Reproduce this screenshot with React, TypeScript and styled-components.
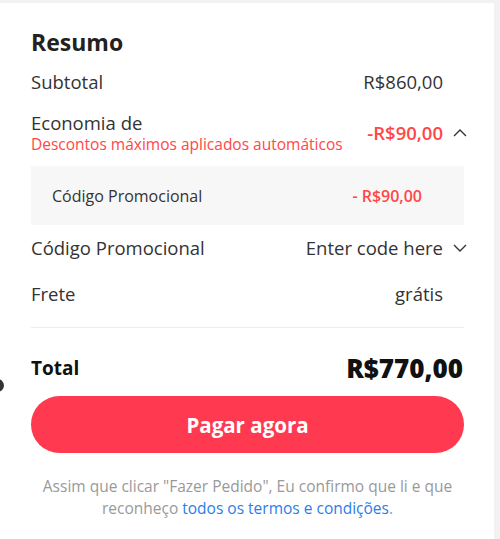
import React from "react";
import styled, { createGlobalStyle } from "styled-components";

const GlobalStyle = createGlobalStyle`
  html, body {
    margin: 0;
    padding: 0;
    background: #f2f2f2;
    font-family: "Open Sans", "Noto Sans", sans-serif;
    color: #222;
  }
`;

const Page = styled.div`
  position: relative;
  height: 539px;
  padding: 3px 6px 0 0;
  box-sizing: border-box;
  overflow: hidden;
`;

const Card = styled.div`
  background: #fff;
  height: 100%;
  padding: 23px 30px 0 31px;
  box-sizing: border-box;
  display: flex;
  flex-direction: column;
`;

const Title = styled.h2`
  margin: 0 0 11px;
  font-size: 23px;
  line-height: 32px;
  font-weight: 700;
  color: #222;
`;

const Row = styled.div<{ $gap?: number }>`
  display: grid;
  grid-template-columns: 1fr auto 21px;
  align-items: center;
  margin-top: ${(p) => p.$gap ?? 0}px;
  min-height: 26px;
`;

const Label = styled.div`
  font-size: 18.5px;
  line-height: 24px;
  color: #333;
`;

const SubLabel = styled.div`
  font-size: 15.5px;
  line-height: 19px;
  color: #ff4747;
`;

const Value = styled.div<{ $red?: boolean }>`
  font-size: 18.5px;
  line-height: 24px;
  color: ${(p) => (p.$red ? "#ff4747" : "#333")};
  font-weight: ${(p) => (p.$red ? 600 : 400)};
  text-align: right;
`;

const Chevron = styled.svg`
  width: 14px;
  height: 14px;
  justify-self: end;
  margin-right: -3px;
`;

const PromoBox = styled.div`
  background: #f7f7f7;
  height: 59px;
  margin-top: 12px;
  padding: 0 21px;
  display: grid;
  grid-template-columns: 1fr auto 21px;
  align-items: center;
`;

const PromoLabel = styled.div`
  font-size: 16px;
  color: #333;
`;

const PromoValue = styled.div`
  font-size: 16px;
  font-weight: 600;
  color: #ff4747;
`;

const Divider = styled.hr`
  border: none;
  border-top: 1px solid #ececec;
  margin: 20px 0 0;
`;

const TotalRow = styled.div`
  display: flex;
  justify-content: space-between;
  align-items: center;
  margin-top: 23px;
  line-height: 34px;
`;

const TotalLabel = styled.div`
  font-size: 19px;
  font-weight: 700;
  color: #111;
`;

const TotalValue = styled.div`
  font-size: 26px;
  font-weight: 800;
  color: #111;
  margin-right: 1px;
`;

const PayButton = styled.button`
  margin-top: 11px;
  height: 57px;
  border: none;
  border-radius: 29px;
  background: #ff3a50;
  color: #fff;
  font-family: inherit;
  font-size: 20.5px;
  font-weight: 700;
  cursor: pointer;
`;

const Note = styled.p`
  margin: 22px 0 0;
  text-align: center;
  font-size: 15.5px;
  line-height: 22px;
  color: #999;
`;

const Link = styled.a`
  color: #2b7de9;
  text-decoration: none;
`;

const EdgeDot = styled.div`
  position: absolute;
  left: -9px;
  top: 379px;
  width: 13px;
  height: 13px;
  border-radius: 50%;
  background: #333;
`;

const Up = () => (
  <Chevron viewBox="0 0 14 14" fill="none" stroke="#333" strokeWidth="1.4">
    <path d="M1 10 7 4 13 10" />
  </Chevron>
);

const Down = () => (
  <Chevron viewBox="0 0 14 14" fill="none" stroke="#333" strokeWidth="1.4">
    <path d="M1 4 7 10 13 4" />
  </Chevron>
);

export default function App() {
  return (
    <Page>
      <GlobalStyle />
      <EdgeDot />
      <Card>
        <Title>Resumo</Title>
        <Row>
          <Label>Subtotal</Label>
          <Value>R$860,00</Value>
          <span />
        </Row>
        <Row $gap={16}>
          <div>
            <Label>Economia de</Label>
            <SubLabel>Descontos máximos aplicados automáticos</SubLabel>
          </div>
          <Value $red>-R$90,00</Value>
          <Up />
        </Row>
        <PromoBox>
          <PromoLabel>Código Promocional</PromoLabel>
          <PromoValue>- R$90,00</PromoValue>
          <span />
        </PromoBox>
        <Row $gap={10}>
          <Label>Código Promocional</Label>
          <Value>Enter code here</Value>
          <Down />
        </Row>
        <Row $gap={20}>
          <Label>Frete</Label>
          <Value>grátis</Value>
          <span />
        </Row>
        <Divider />
        <TotalRow>
          <TotalLabel>Total</TotalLabel>
          <TotalValue>R$770,00</TotalValue>
        </TotalRow>
        <PayButton>Pagar agora</PayButton>
        <Note>
          Assim que clicar "Fazer Pedido", Eu confirmo que li e que reconheço{" "}
          <Link href="#">todos os termos e condições</Link>.
        </Note>
      </Card>
    </Page>
  );
}
